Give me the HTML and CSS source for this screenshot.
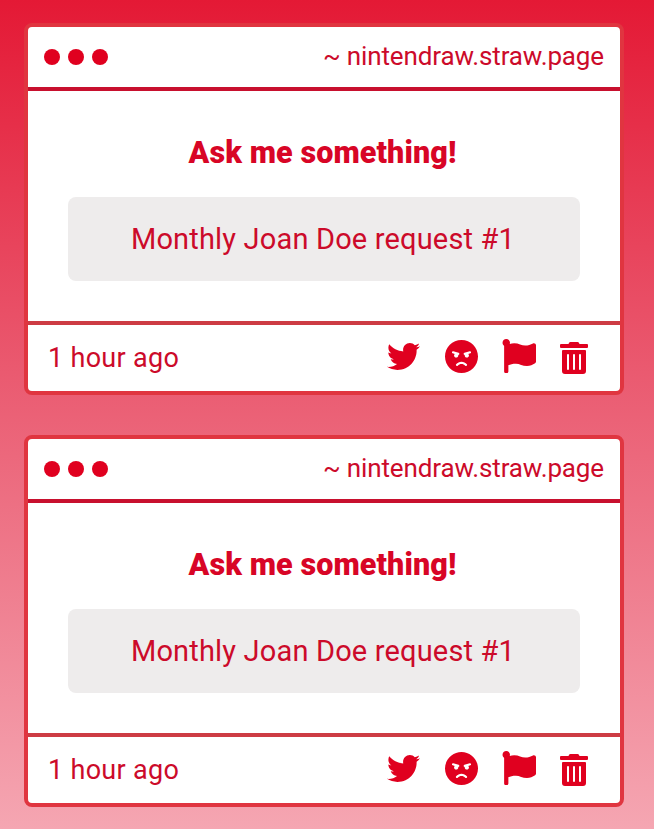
FILE: index.html
```html
<!DOCTYPE html>
<html lang="en">
<head>
    <meta charset="utf-8">
    <title>Inbox</title>
    <link rel="stylesheet" href="styles.css">
</head>
<body>
    <!-- Icons shared by every card -->
    <svg class="sprite">
        <symbol id="icon-twitter" viewBox="0 0 512 512">
            <path d="M459.37 151.716c.325 4.548.325 9.097.325 13.645 0 138.72-105.583 298.558-298.558 298.558-59.452 0-114.68-17.219-161.137-47.106 8.447.974 16.568 1.299 25.34 1.299 49.055 0 94.213-16.568 130.274-44.832-46.132-.975-84.792-31.188-98.112-72.772 6.498.974 12.995 1.624 19.818 1.624 9.421 0 18.843-1.3 27.614-3.573-48.081-9.747-84.143-51.98-84.143-102.985v-1.299c13.969 7.797 30.214 12.67 47.431 13.319-28.264-18.843-46.781-51.005-46.781-87.391 0-19.492 5.197-37.36 14.294-52.954 51.655 63.675 129.3 105.258 216.365 109.807-1.624-7.797-2.599-15.918-2.599-24.04 0-57.828 46.782-104.934 104.934-104.934 30.213 0 57.502 12.67 76.67 33.137 23.715-4.548 46.456-13.32 66.599-25.34-7.798 24.366-24.366 44.833-46.132 57.827 21.117-2.273 41.584-8.122 60.426-16.243-14.292 20.791-32.161 39.308-52.628 54.253z"/>
        </symbol>
        <symbol id="icon-angry" viewBox="0 8 496 496">
            <path d="M248 8C111 8 0 119 0 256s111 248 248 248 248-111 248-248S385 8 248 8zM136 240c0-9.3 4.1-17.5 10.5-23.4l-31-9.3c-8.5-2.5-13.3-11.5-10.7-19.9 2.5-8.5 11.4-13.2 19.9-10.7l80 24c8.5 2.5 13.3 11.5 10.7 19.9-2.1 6.9-8.4 11.4-15.3 11.4-.5 0-1.1-.2-1.7-.2.7 2.7 1.7 5.3 1.7 8.2 0 17.7-14.3 32-32 32S136 257.7 136 240zm168 154.2c-27.8-33.4-84.2-33.4-112.1 0-13.5 16.3-38.2-4.2-24.6-20.5 20-24 49.4-37.8 80.6-37.8s60.6 13.8 80.6 37.8c13.8 16.5-11.1 36.6-24.5 20.5zm76.6-186.9l-31 9.3c6.3 5.8 10.5 14.1 10.5 23.4 0 17.7-14.3 32-32 32s-32-14.3-32-32c0-2.9.9-5.6 1.7-8.2-.6.1-1.1.2-1.7.2-6.9 0-13.2-4.5-15.3-11.4-2.5-8.5 2.3-17.4 10.7-19.9l80-24c8.4-2.5 17.4 2.3 19.9 10.7 2.5 8.5-2.3 17.4-10.8 19.9z"/>
        </symbol>
        <symbol id="icon-flag" viewBox="0 0 512 512">
            <path d="M349.565 98.783C295.978 98.783 251.721 64 184.348 64c-24.955 0-47.309 4.384-68.045 12.013a55.947 55.947 0 0 0 3.586-23.562C118.117 24.015 94.806 1.206 66.338.048 34.345-1.254 8 24.296 8 56c0 19.026 9.497 35.825 24 45.945V488c0 13.255 10.745 24 24 24h16c13.255 0 24-10.745 24-24v-94.4c28.311-12.064 63.582-22.122 114.435-22.122 53.588 0 97.844 34.783 165.217 34.783 48.169 0 86.667-16.294 122.505-40.858C506.84 359.452 512 349.571 512 339.045v-243.1c0-23.393-24.269-38.87-45.485-29.016-34.338 15.948-76.454 31.854-116.95 31.854z"/>
        </symbol>
        <symbol id="icon-trash" viewBox="0 0 448 512">
            <path d="M32 464a48 48 0 0 0 48 48h288a48 48 0 0 0 48-48V144a16 16 0 0 0-16-16H48a16 16 0 0 0-16 16zm272-256a16 16 0 0 1 32 0v224a16 16 0 0 1-32 0zm-96 0a16 16 0 0 1 32 0v224a16 16 0 0 1-32 0zm-96 0a16 16 0 0 1 32 0v224a16 16 0 0 1-32 0zM432 32H312l-9.4-18.7A24 24 0 0 0 281.1 0H166.8a23.72 23.72 0 0 0-21.4 13.3L136 32H16A16 16 0 0 0 0 48v32a16 16 0 0 0 16 16h416a16 16 0 0 0 16-16V48a16 16 0 0 0-16-16z"/>
        </symbol>
    </svg>

    <div class="card">
        <div class="card-header">
            <div class="dots"><span></span><span></span><span></span></div>
            <div class="site">~ nintendraw.straw.page</div>
        </div>
        <div class="card-body">
            <h2>Ask me something!</h2>
            <div class="message">Monthly Joan Doe request #1</div>
        </div>
        <div class="card-footer">
            <div class="time">1 hour ago</div>
            <div class="actions">
                <svg class="twitter"><use href="#icon-twitter"/></svg>
                <svg class="angry"><use href="#icon-angry"/></svg>
                <svg class="flag"><use href="#icon-flag"/></svg>
                <svg class="trash"><use href="#icon-trash"/></svg>
            </div>
        </div>
    </div>

    <div class="card">
        <div class="card-header">
            <div class="dots"><span></span><span></span><span></span></div>
            <div class="site">~ nintendraw.straw.page</div>
        </div>
        <div class="card-body">
            <h2>Ask me something!</h2>
            <div class="message">Monthly Joan Doe request #1</div>
        </div>
        <div class="card-footer">
            <div class="time">1 hour ago</div>
            <div class="actions">
                <svg class="twitter"><use href="#icon-twitter"/></svg>
                <svg class="angry"><use href="#icon-angry"/></svg>
                <svg class="flag"><use href="#icon-flag"/></svg>
                <svg class="trash"><use href="#icon-trash"/></svg>
            </div>
        </div>
    </div>
</body>
</html>
```
FILE: styles.css
```css
* {
    box-sizing: border-box;
}

body {
    margin: 0;
    height: 829px;
    padding: 23px 30px 0 24px;
    overflow: hidden;
    font-family: Roboto, sans-serif;
    color: #cc0a2a;
    background: linear-gradient(#e41935, #ea5a70 45%, #f5a6b2);
}

.sprite {
    display: none;
}

.card {
    height: 372px;
    margin-bottom: 40px;
    display: flex;
    flex-direction: column;
    background: white;
    border: 4px solid #e03540;
    border-radius: 8px;
}

.card-header {
    height: 64px;
    padding: 0 16px;
    display: flex;
    justify-content: space-between;
    align-items: center;
    border-bottom: 4px solid #c8102e;
}

.dots {
    display: flex;
    gap: 8px;
}

.dots span {
    width: 16px;
    height: 16px;
    border-radius: 50%;
    background: #e0001f;
}

.site {
    padding-bottom: 2px;
    font-size: 26px;
    line-height: 30px;
    letter-spacing: -0.13px;
}

.card-body {
    flex: 1;
    padding: 40px 40px 0;
    text-align: center;
}

h2 {
    margin: 0 3px 22px 0;
    font-size: 30.5px;
    line-height: 44px;
    font-weight: 900;
    letter-spacing: 0.1px;
    color: #d80526;
}

.message {
    height: 84px;
    padding-right: 2px;
    line-height: 84px;
    font-size: 29px;
    letter-spacing: 0.17px;
    background: #eeecec;
    border-radius: 8px;
}

/* Bottom row with the age of the message and the action icons */
.card-footer {
    height: 70px;
    padding: 0 32px 0 20px;
    display: flex;
    justify-content: space-between;
    align-items: center;
    border-top: 4px solid #cd3c44;
}

.time {
    font-size: 27px;
    letter-spacing: 0.3px;
}

.actions {
    display: flex;
    align-items: center;
    fill: #e0001f;
}

.twitter {
    width: 33px;
    height: 33px;
    margin: 0 25px 4px 0;
}

.angry {
    width: 33px;
    height: 33px;
    margin: 0 24px 4px 0;
}

.flag {
    width: 34px;
    height: 34px;
    margin: 0 24px 4px 0;
}

.trash {
    width: 28px;
    height: 32px;
}
```
